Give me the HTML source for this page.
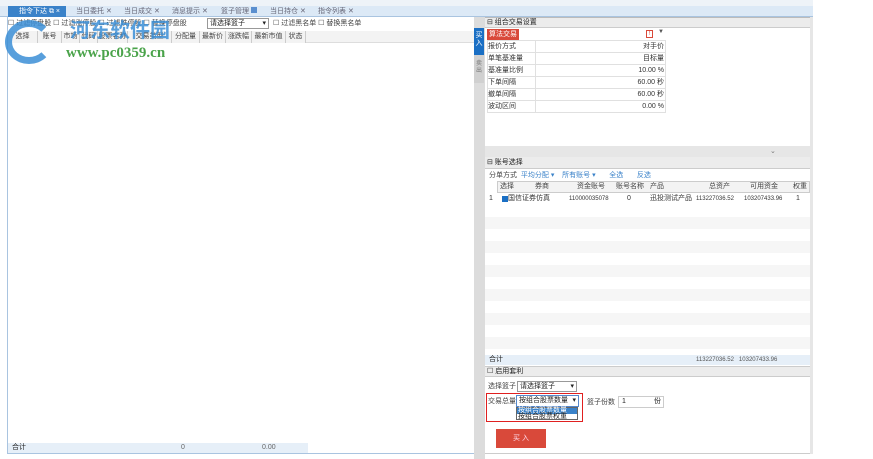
<!DOCTYPE html>
<html><head><meta charset="utf-8"><style>
*{margin:0;padding:0;box-sizing:border-box}
body{width:873px;height:459px;background:#fff;position:relative;overflow:hidden;font-family:"Liberation Sans","Noto Sans CJK SC",sans-serif;font-size:7px;color:#333}
.a{position:absolute;white-space:nowrap}
.tab{position:absolute;top:6px;height:11px;line-height:11px;color:#667;font-size:7px}
.th{position:absolute;top:31px;height:12px;line-height:12px;border-right:1px solid #ccc;background:#f3f3f3;text-align:center;color:#444}
.row{position:absolute;left:487px;width:179px;height:12px;line-height:12px;border-bottom:1px solid #e0e0e0}
.row span{position:absolute}
.g{background:#e6e6e6}
</style></head><body>
<div class="a" style="left:0;top:0;width:813px;height:6px;background:#eef3f8"></div>
<div class="a" style="left:0;top:6px;width:813px;height:11px;background:#dce9f6;border-bottom:1px solid #a9c4e0"></div>
<div class="a" style="left:8px;top:6px;width:58px;height:11px;background:#3a82c9"></div>
<div class="tab" style="left:19px;color:#fff">指令下达 ⧉ ×</div>
<div class="tab" style="left:76px">当日委托 ✕</div>
<div class="tab" style="left:124px">当日成交 ✕</div>
<div class="tab" style="left:172px">消息提示 ✕</div>
<div class="tab" style="left:221px">篮子管理 <span style="display:inline-block;width:6px;height:6px;background:#5a8fcf"></span></div>
<div class="tab" style="left:270px">当日持仓 ✕</div>
<div class="tab" style="left:318px">指令列表 ✕</div>
<!-- left panel -->
<div class="a" style="left:7px;top:17px;width:1px;height:437px;background:#a9c4e0"></div>
<div class="a" style="left:8px;top:18px;height:12px;line-height:12px;color:#444">☐ 过滤停盘股 ☐ 过滤涨停股 ☐ 过滤跌停股 ☐ 替换停盘股</div>
<div class="a" style="left:207px;top:18px;width:62px;height:11px;border:1px solid #999;background:#fff;line-height:9px;padding-left:2px;color:#222">请选择篮子 <span style="float:right;margin-right:2px">▾</span></div>
<div class="a" style="left:273px;top:18px;line-height:12px;color:#444">☐ 过滤黑名单 ☐ 替换黑名单</div>
<div class="a" style="left:8px;top:31px;width:466px;height:12px;background:#f3f3f3;border-bottom:1px solid #ddd"></div>
<div class="th" style="left:8px;width:30px">选择</div><div class="th" style="left:38px;width:24px">账号</div><div class="th" style="left:62px;width:18px">市场</div><div class="th" style="left:80px;width:18px">代码</div><div class="th" style="left:98px;width:30px">股票名称</div><div class="th" style="left:128px;width:44px">交易类型</div><div class="th" style="left:172px;width:28px">分配量</div><div class="th" style="left:200px;width:26px">最新价</div><div class="th" style="left:226px;width:26px">涨跌幅</div><div class="th" style="left:252px;width:34px">最新市值</div><div class="th" style="left:286px;width:20px">状态</div>
<div class="a" style="left:8px;top:443px;width:300px;height:10px;background:#e6eff8"></div>
<div class="a" style="left:12px;top:443px;line-height:10px;color:#222">合计</div>
<div class="a" style="left:181px;top:443px;line-height:10px;color:#666">0</div>
<div class="a" style="left:262px;top:443px;line-height:10px;color:#666">0.00</div>
<div class="a" style="left:8px;top:453px;width:466px;height:1px;background:#a9c4e0"></div>
<div class="a" style="left:474px;top:17px;width:11px;height:442px;background:#dcdcdc"></div>
<div class="a" style="left:474px;top:28px;width:10px;height:27px;background:#1a6fc4;color:#fff;font-size:7px;line-height:8px;text-align:center;padding-top:4px;white-space:normal">买入</div>
<div class="a" style="left:474px;top:55px;width:10px;height:28px;background:#d0d0d0;color:#777;font-size:6px;line-height:7px;text-align:center;padding-top:6px;white-space:normal">卖出</div>
<!-- watermark -->
<div class="a" style="left:5px;top:20px;width:48px;height:44px;border-radius:50%;border:7px solid #3b8fd6;border-right-color:transparent;opacity:.85"></div>
<div class="a" style="left:70px;top:14px;font-size:20px;font-weight:bold;color:#3b8fd6;opacity:.85">河东软件园</div>
<div class="a" style="left:66px;top:45px;font-size:15px;font-weight:bold;color:#4aa34a;font-family:'Liberation Serif',serif">www.pc0359.cn</div>
<!-- right panel -->
<div class="a" style="left:485px;top:17px;width:328px;height:11px;background:#ececec;border-top:1px solid #bbb;border-bottom:1px solid #ccc;line-height:10px;padding-left:2px;color:#222">⊟ 组合交易设置</div>
<div class="a" style="left:487px;top:29px;width:32px;height:11px;background:#d9493a;color:#fff;line-height:11px;text-align:center">算法交易</div>
<div class="a" style="left:646px;top:30px;width:7px;height:8px;border:1px solid #d9493a;color:#d9493a;font-size:6px;line-height:6px;text-align:center">!</div>
<div class="a" style="left:658px;top:29px;font-size:6px;color:#555">▼</div>
<div class="a" style="left:487px;top:40px;width:179px;height:73px;border:1px solid #e0e0e0"></div>
<div class="a" style="left:535px;top:40px;width:1px;height:73px;background:#e0e0e0"></div>
<div class="row" style="top:41px"><span style="left:1px">报价方式</span><span style="right:2px">对手价</span></div>
<div class="row" style="top:53px"><span style="left:1px">单笔基准量</span><span style="right:2px">目标量</span></div>
<div class="row" style="top:65px"><span style="left:1px">基准量比例</span><span style="right:2px">10.00 %</span></div>
<div class="row" style="top:77px"><span style="left:1px">下单间隔</span><span style="right:2px">60.00 秒</span></div>
<div class="row" style="top:89px"><span style="left:1px">撤单间隔</span><span style="right:2px">60.00 秒</span></div>
<div class="row" style="top:101px"><span style="left:1px">波动区间</span><span style="right:2px">0.00 %</span></div>
<div class="a g" style="left:485px;top:146px;width:328px;height:11px"></div>
<div class="a" style="left:770px;top:146px;line-height:11px;color:#777">⌄</div>
<div class="a" style="left:485px;top:157px;width:328px;height:12px;background:#ececec;border-bottom:1px solid #ccc;line-height:12px;padding-left:2px;color:#222">⊟ 账号选择</div>
<div class="a" style="left:489px;top:170px;line-height:11px;color:#444">分单方式 <span style="color:#3a82c9">&nbsp;平均分配 ▾ &nbsp;&nbsp;&nbsp;所有账号 ▾</span> &nbsp;&nbsp;&nbsp;&nbsp;&nbsp;&nbsp;<span style="color:#3a82c9">全选 &nbsp;&nbsp;&nbsp;&nbsp;&nbsp;&nbsp;反选</span></div>
<div class="a" style="left:485px;top:181px;width:325px;height:175px;background:repeating-linear-gradient(#fff 0 12px,#f6f6f6 12px 24px)"></div>
<div class="a" style="left:497px;top:181px;width:313px;height:12px;background:#f3f3f3;border:1px solid #ccc"></div>
<div class="a" style="left:497px;top:181px;height:12px;line-height:12px;color:#444;font-size:7px">
<span class="a" style="left:3px">选择</span><span class="a" style="left:38px">券商</span><span class="a" style="left:80px">资金账号</span><span class="a" style="left:119px">账号名称</span><span class="a" style="left:153px">产品</span><span class="a" style="left:212px">总资产</span><span class="a" style="left:253px">可用资金</span><span class="a" style="left:296px">权重</span></div>
<div class="a" style="left:485px;top:193px;width:325px;height:12px;line-height:12px;background:#fff;color:#333">
<span class="a" style="left:4px">1</span><span class="a" style="left:17px;top:3px;width:6px;height:6px;background:#1a6fc4"></span><span class="a" style="left:23px">国信证券仿真</span><span class="a" style="left:84px;font-size:6px">110000035078</span><span class="a" style="left:142px">0</span><span class="a" style="left:165px">迅投测试产品</span><span class="a" style="left:211px;font-size:6px">113227036.52</span><span class="a" style="left:259px;font-size:6px">103207433.96</span><span class="a" style="left:311px">1</span></div>
<div class="a" style="left:485px;top:355px;width:325px;height:10px;background:#e6eff8;line-height:10px"><span class="a" style="left:4px;color:#222">合计</span><span class="a" style="left:211px;font-size:6px;color:#555">113227036.52 &nbsp;&nbsp;103207433.96</span></div>
<div class="a" style="left:485px;top:366px;width:328px;height:11px;background:#ececec;border-top:1px solid #ccc;border-bottom:1px solid #ccc;line-height:10px;padding-left:2px;color:#222">☐ 启用套利</div>
<div class="a" style="left:488px;top:382px;line-height:10px;color:#444">选择篮子</div>
<div class="a" style="left:517px;top:381px;width:60px;height:11px;border:1px solid #999;line-height:9px;padding-left:2px;color:#222">请选择篮子<span style="float:right;margin-right:2px">▾</span></div>
<div class="a" style="left:486px;top:393px;width:97px;height:29px;border:1px solid #e02020"></div>
<div class="a" style="left:488px;top:397px;line-height:10px;color:#444">交易总量</div>
<div class="a" style="left:516px;top:395px;width:63px;height:12px;border:1px solid #5588cc;line-height:10px;padding-left:2px;color:#222">按组合股票数量<span style="float:right;margin-right:2px">▾</span></div>
<div class="a" style="left:516px;top:407px;width:62px;height:13px;border:1px solid #666;background:#fff"></div>
<div class="a" style="left:517px;top:408px;width:60px;height:6px;background:#3a82c9;color:#fff;line-height:6px;font-size:7px;padding-left:1px">按组合股票数量</div>
<div class="a" style="left:518px;top:414px;line-height:6px;color:#222;font-size:7px">按组合股票权重</div>
<div class="a" style="left:587px;top:398px;line-height:10px;color:#444">篮子份数</div>
<div class="a" style="left:618px;top:396px;width:46px;height:12px;border:1px solid #ccc;line-height:10px;padding-left:3px;color:#222">1<span style="float:right;margin-right:2px">份</span></div>
<div class="a" style="left:496px;top:429px;width:50px;height:19px;background:#d9493a;color:#fde;text-align:center;line-height:19px">买 入</div>
<div class="a" style="left:485px;top:453px;width:328px;height:1px;background:#ccc"></div>
<div class="a" style="left:810px;top:17px;width:3px;height:437px;background:#e6e6e6"></div>
</body></html>
